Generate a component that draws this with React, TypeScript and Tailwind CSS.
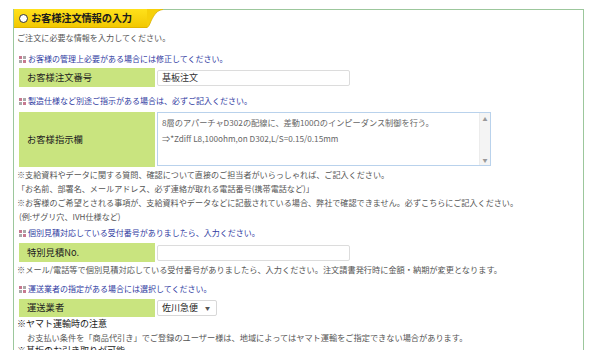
import React from "react"

const FONT = { fontFamily: '"Noto Sans CJK JP", "Noto Sans", sans-serif' }

// 見出し横の小さな四角アイコン
function Dots() {
  return (
    <span className="inline-grid grid-cols-2 gap-[1px] mr-[2px] w-[7px] h-[7px] shrink-0">
      <span className="bg-[#c77990]" />
      <span className="bg-[#a9a9a9]" />
      <span className="bg-[#a9a9a9]" />
      <span className="bg-[#c77990]" />
    </span>
  )
}

function Heading({ children, className = "" }: { children: React.ReactNode; className?: string }) {
  return (
    <div className={`flex items-center pl-[2px] h-[14px] leading-[14px] text-[8px] text-[#2f3a9f] ${className}`}>
      <Dots />
      <span>{children}</span>
    </div>
  )
}

function Label({ children, h }: { children: React.ReactNode; h: string }) {
  return (
    <div className={`w-[136px] ${h} bg-[#c9e47f] flex items-center pl-[8px] text-[9.3px] text-[#222]`}>
      {children}
    </div>
  )
}

export default function App() {
  return (
    <div className="w-[600px] h-[350px] overflow-hidden bg-white" style={FONT}>
      <div className="ml-[13px] mt-[9px] w-[571px] h-[400px] border-l border-r border-[#9cc79c]">

        {/* タブ */}
        <div className="flex h-[19px]">
          <div className="flex items-center h-[19px] w-[133px] bg-gradient-to-b from-[#ffe11a] to-[#f2c800] pl-[5px] border-b border-[#e0b400]">
            <span className="w-[9px] h-[9px] rounded-full border-[1.5px] border-[#333] bg-white mr-[3px]" />
            <span className="text-[10.3px] font-bold text-[#1c1c1c] tracking-[-0.2px]">お客様注文情報の入力</span>
          </div>
          <svg width="16" height="19" viewBox="0 0 16 19" className="shrink-0">
            <path d="M0 0 L16 0 L16 0.8 C10 1 7 6 4 12 C2.5 16 1.5 18 0 18.5 Z" fill="#f6d00a" />
            <path d="M16 0.5 C10 1 7 6 4 12 C2.5 16 1.5 18 0 18.5" fill="none" stroke="#d9b000" strokeWidth="0.8" />
          </svg>
          <div className="flex-1 border-t border-[#9cc79c]" />
        </div>

        <div className="pl-[3px] text-[#555]">
          <div className="h-[20px] leading-[20px] text-[8.1px]">ご注文に必要な情報を入力してください。</div>

          <Heading className="mt-[4px]">お客様の管理上必要がある場合には修正してください。</Heading>
          <div className="flex ml-[2px] mt-[2px] gap-[2px] items-center">
            <Label h="h-[19px]">お客様注文番号</Label>
            <div className="w-[193px] h-[16px] border border-[#dcdcdc] rounded-[2px] flex items-center pl-[4px] text-[9px] text-[#333]">基板注文</div>
          </div>

          <Heading className="mt-[7px]">製造仕様など別途ご指示がある場合は、必ずご記入ください。</Heading>
          <div className="flex ml-[2px] mt-[4px] gap-[2px]">
            <Label h="h-[55px]">お客様指示欄</Label>
            <div className="w-[334px] h-[54px] border border-[#b9d2ec] flex">
              <div className="flex-1 pl-[4px] pt-[1px] text-[8.2px] leading-[16px] text-[#666]">
                <div>8層のアパーチャD302の配線に、差動100Ωのインピーダンス制御を行う。</div>
                <div>⇒*Zdiff L8,100ohm,on D302,L/S=0.15/0.15mm</div>
              </div>
              <div className="w-[11px] bg-[#f4f4f4] border-l border-[#ececec] flex flex-col justify-between items-center py-[3px] text-[5px] text-[#999] leading-none">
                <span>▲</span>
                <span>▼</span>
              </div>
            </div>
          </div>

          <div className="mt-[1px] text-[8.1px] leading-[14px]">
            <div>※支給資料やデータに関する質問、確認について直接のご担当者がいらっしゃれば、ご記入ください。</div>
            <div>「お名前、部署名、メールアドレス、必ず連絡が取れる電話番号(携帯電話など)」</div>
            <div>※お客様のご希望とされる事項が、支給資料やデータなどに記載されている場合、弊社で確認できません。必ずこちらにご記入ください。</div>
            <div className="pl-[2px]">(例:ザグリ穴、IVH仕様など)</div>
          </div>

          <Heading className="mt-[2px]">個別見積対応している受付番号がありましたら、入力ください。</Heading>
          <div className="flex ml-[2px] mt-[3px] gap-[2px] items-center">
            <Label h="h-[19px]">特別見積No.</Label>
            <div className="w-[193px] h-[16px] border border-[#dcdcdc] rounded-[2px]" />
          </div>
          <div className="h-[14px] leading-[14px] text-[8.2px]">※メール/電話等で個別見積対応している受付番号がありましたら、入力ください。注文請書発行時に金額・納期が変更となります。</div>

          <Heading className="mt-[6px]">運送業者の指定がある場合には選択してください。</Heading>
          <div className="flex ml-[2px] mt-[3px] gap-[2px] items-center">
            <Label h="h-[18px]">運送業者</Label>
            <div className="w-[60px] h-[16px] border border-[#d8d8d8] rounded-[2px] flex items-center pl-[4px] text-[9px] text-[#222]">
              <span>佐川急便</span>
              <span className="ml-[7px] text-[5px] text-[#555]">▼</span>
            </div>
          </div>

          <div className="h-[14px] leading-[14px] text-[9px] text-[#1a1a1a]">※ヤマト運輸時の注意</div>
          <div className="h-[13px] leading-[13px] text-[8.2px] pl-[10px]">お支払い条件を「商品代引き」でご登録のユーザー様は、地域によってはヤマト運輸をご指定できない場合があります。</div>
          <div className="h-[14px] leading-[14px] text-[9px] text-[#1a1a1a]">※基板のお引き取りが可能</div>
        </div>
      </div>
    </div>
  )
}
